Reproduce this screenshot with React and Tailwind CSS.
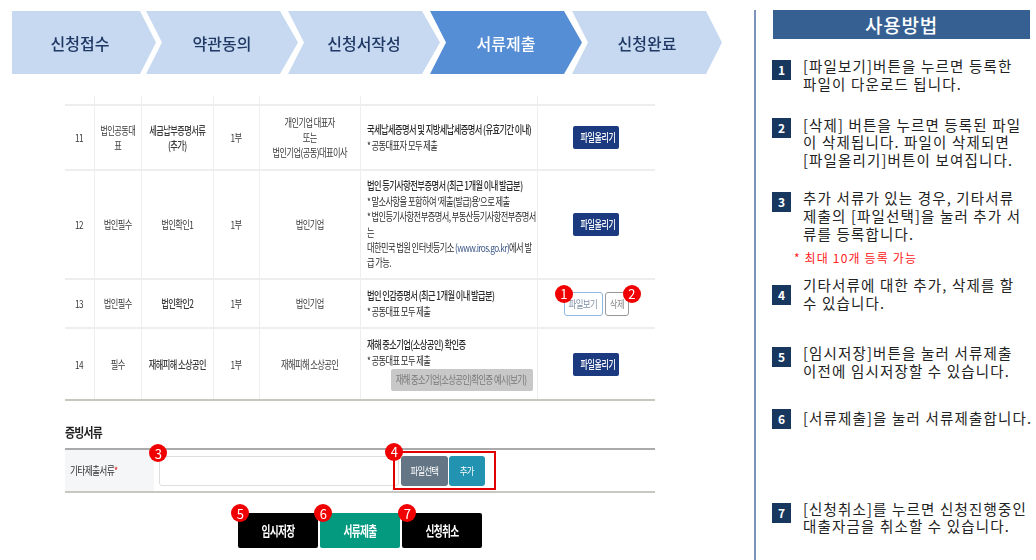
const font = { fontFamily: '"Noto Sans CJK KR", "Noto Sans", sans-serif' };

const steps = [
  { label: "신청접수", first: true },
  { label: "약관동의" },
  { label: "신청서작성" },
  { label: "서류제출", active: true },
  { label: "신청완료", last: true },
];

const guide = [
  { no: 1, mt: "mt-[18px]", sq: "mt-[3px]", text: ["[파일보기]버튼을 누르면 등록한", "파일이 다운로드 됩니다."] },
  { no: 2, mt: "mt-[23px]", sq: "mt-[2px]", text: ["[삭제] 버튼을 누르면 등록된 파일", "이 삭제됩니다. 파일이 삭제되면", "[파일올리기]버튼이 보여집니다."] },
  { no: 3, mt: "mt-[20px]", sq: "mt-[3px]", text: ["추가 서류가 있는 경우, 기타서류", "제출의 [파일선택]을 눌러 추가 서", "류를 등록합니다."], note: "*  최대 10개 등록 가능" },
  { no: 4, mt: "mt-[11px]", sq: "mt-[9px]", text: ["기타서류에 대한 추가, 삭제를 할", "수 있습니다."] },
  { no: 5, mt: "mt-[32px]", sq: "mt-[3px]", text: ["[임시저장]버튼을 눌러 서류제출", "이전에 임시저장할 수 있습니다."] },
  { no: 6, mt: "mt-[29px]", sq: "mt-0", text: ["[서류제출]을 눌러 서류제출합니다."] },
  { no: 7, mt: "mt-[71px]", sq: "mt-[3px]", text: ["[신청취소]를 누르면 신청진행중인", "대출자금을 취소할 수 있습니다."] },
];

// the table in the picture is a squeezed capture, so its text is narrowed
function Mid({ children, className = "" }) {
  return <div className={`mx-[-16.67%] scale-x-[.75] whitespace-nowrap ${className}`}>{children}</div>;
}

function Left({ children }) {
  return <div className="w-[133.3%] origin-left scale-x-[.75] whitespace-nowrap">{children}</div>;
}

function Narrow({ children, className = "scale-x-[.8]" }) {
  return <span className={`inline-block whitespace-nowrap ${className}`}>{children}</span>;
}

function Badge({ n, className }) {
  return (
    <span className={`absolute z-10 flex h-[18px] w-[18px] items-center justify-center rounded-full bg-[#f00000] text-[13px] leading-none text-white ${className}`}>
      {n}
    </span>
  );
}

function UploadBtn() {
  return (
    <button className="h-[23px] w-[46px] rounded-[2px] bg-[#1b3a80] text-[11.5px] font-medium tracking-[-0.05em] text-white">
      <Narrow className="scale-x-[.7]">파일올리기</Narrow>
    </button>
  );
}

function StepBar() {
  return (
    <div className="flex h-[63px]">
      {steps.map((s) => (
        <div
          key={s.label}
          className={`flex h-full items-center justify-center text-[16px] font-medium ${
            s.first
              ? "w-[144px] pr-[8px] [clip-path:polygon(0_0,128px_0,100%_50%,128px_100%,0_100%)]"
              : `-ml-[10px] ${s.last ? "w-[150px]" : "w-[152px]"} [clip-path:polygon(0_0,134px_0,100%_50%,134px_100%,0_100%,16px_50%)]`
          } ${s.active ? "bg-[#558ed5] text-white" : "bg-[#c6d9f1] text-[#1f3864]"}`}
        >
          {s.label}
        </div>
      ))}
    </div>
  );
}

function DocTable() {
  const cell = "border-x border-[#eeeeee] border-b-2 border-b-[#eeeeee] text-center align-middle";
  const desc = "border-x border-[#eeeeee] border-b-2 border-b-[#eeeeee] pl-[6px] align-middle text-[#2b2b2b] leading-[15.4px]";
  const stub = "border-l border-[#eeeeee]";
  return (
    <table className="w-[590px] table-fixed border-collapse text-[11px] leading-[15px] tracking-[-0.07em] text-[#3a3a3a]">
      <colgroup>
        <col className="w-[29px]" />
        <col className="w-[47px]" />
        <col className="w-[72px]" />
        <col className="w-[46px]" />
        <col className="w-[101px]" />
        <col className="w-[177px]" />
        <col className="w-[118px]" />
      </colgroup>
      <tbody>
        <tr className="h-[9px] border-b-2 border-b-[#eeeeee]">
          <td />
          <td className={stub} />
          <td className={stub} />
          <td className={stub} />
          <td className={stub} />
          <td className={stub} />
          <td className={stub} />
        </tr>
        <tr className="h-[65px]">
          <td className={`${cell} border-l-0`}><Mid>11</Mid></td>
          <td className={cell}><Mid>법인공동대<br />표</Mid></td>
          <td className={`${cell} font-medium`}><Mid>세금납부증명서류<br />(추가)</Mid></td>
          <td className={cell}><Mid>1부</Mid></td>
          <td className={cell}><Mid>개인기업 대표자<br />또는<br />법인기업(공동)대표이사</Mid></td>
          <td className={desc}><Left><span className="font-medium">국세납세증명서 및 지방세납세증명서 (유효기간 이내)</span><br />* 공동대표자 모두 제출</Left></td>
          <td className={`${cell} border-r-0`}><UploadBtn /></td>
        </tr>
        <tr className="h-[109px]">
          <td className={`${cell} border-l-0`}><Mid>12</Mid></td>
          <td className={cell}><Mid>법인필수</Mid></td>
          <td className={cell}><Mid>법인확인1</Mid></td>
          <td className={cell}><Mid>1부</Mid></td>
          <td className={cell}><Mid>법인기업</Mid></td>
          <td className={desc}>
            <Left>
              <span className="font-medium">법인 등기사항전부증명서 (최근 1개월 이내 발급분)</span><br />
              * 말소사항을 포함하여 '제출(발급)용'으로 제출<br />
              * 법인등기사항전부증명서, 부동산등기사항전부증명서<br />는<br />
              대한민국 법원 인터넷등기소 <span className="text-[#3f5a8a]">(www.iros.go.kr)</span>에서 발<br />급 가능.
            </Left>
          </td>
          <td className={`${cell} border-r-0`}><UploadBtn /></td>
        </tr>
        <tr className="h-[49px]">
          <td className={`${cell} border-l-0`}><Mid>13</Mid></td>
          <td className={cell}><Mid>법인필수</Mid></td>
          <td className={`${cell} font-medium`}><Mid>법인확인2</Mid></td>
          <td className={cell}><Mid>1부</Mid></td>
          <td className={cell}><Mid>법인기업</Mid></td>
          <td className={desc}><Left><span className="font-medium">법인 인감증명서 (최근 1개월 이내 발급분)</span><br />* 공동대표 모두 제출</Left></td>
          <td className={`${cell} border-r-0`}>
            <div className="relative flex items-center justify-center gap-[2px]">
              <Badge n="1" className="-top-[7px] left-[17px]" />
              <button className="h-[24px] w-[39px] rounded-[3px] border border-[#8fb8e0] text-[10.5px] text-[#7f8fa8]"><Narrow>파일보기</Narrow></button>
              <button className="h-[24px] w-[24px] rounded-[3px] border border-[#999] text-[10.5px] text-[#888]"><Narrow>삭제</Narrow></button>
              <Badge n="2" className="-top-[7px] left-[85px]" />
            </div>
          </td>
        </tr>
        <tr className="h-[72px] border-b-2 border-b-[#c8c8c0]">
          <td className="border-x border-[#eeeeee] border-l-0 text-center"><Mid>14</Mid></td>
          <td className="border-x border-[#eeeeee] text-center"><Mid>필수</Mid></td>
          <td className="border-x border-[#eeeeee] text-center font-medium"><Mid>재해피해 소상공인</Mid></td>
          <td className="border-x border-[#eeeeee] text-center"><Mid>1부</Mid></td>
          <td className="border-x border-[#eeeeee] text-center"><Mid>재해피해 소상공인</Mid></td>
          <td className="border-x border-[#eeeeee] pl-[6px] text-[#2b2b2b] leading-[15.4px]">
            <Left><span className="font-medium">재해 중소기업(소상공인) 확인증</span><br />* 공동대표 모두 제출</Left>
            <div className="ml-[24px] mt-[1px] flex h-[22px] w-[142px] items-center justify-center rounded-[2px] bg-[#c8c8c8] text-[#777]">
              <Narrow className="scale-x-[.75]">재해 중소기업(소상공인)확인증 예시(보기)</Narrow>
            </div>
          </td>
          <td className="border-x border-[#eeeeee] border-r-0 text-center"><UploadBtn /></td>
        </tr>
      </tbody>
    </table>
  );
}

function EvidenceForm() {
  return (
    <div className="mt-[21px] w-[590px] tracking-[-0.06em]">
      <h3 className="origin-left scale-x-[.84] whitespace-nowrap text-[13px] font-bold leading-[20px] text-[#222]">증빙서류</h3>
      <div className="mt-[6px] flex h-[45px] border-y-2 border-t-[#aaaaaa] border-b-[#c8c8c0]">
        <div className="flex w-[89px] items-center bg-[#f5f6f8] pl-[5px] text-[11px] text-[#333]">
          <span className="origin-left scale-x-[.8] whitespace-nowrap">기타제출서류<span className="text-[#e02020]">*</span></span>
        </div>
        <div className="relative flex items-center pl-[5px]">
          <Badge n="3" className="-top-[6px] left-[-5px]" />
          <div className="h-[30px] w-[240px] rounded-[3px] border border-[#dddddd] bg-white" />
          <div className="relative ml-[2px] flex gap-[1px]">
            <Badge n="4" className="-top-[13px] -left-[16px]" />
            <div className="pointer-events-none absolute -left-[8px] -top-[5px] h-[39px] w-[103px] border-2 border-[#e00000]" />
            <button className="h-[30px] w-[47px] rounded-[3px] bg-[#647685] text-[10.5px] text-white"><Narrow>파일선택</Narrow></button>
            <button className="h-[30px] w-[36px] rounded-[3px] bg-[#2293b0] text-[10.5px] text-white"><Narrow>추가</Narrow></button>
          </div>
        </div>
      </div>
      <div className="mt-[20px] flex justify-center gap-[2px]">
        {[
          { n: "5", label: "임시저장", bg: "bg-black", pos: "-left-[7px]" },
          { n: "6", label: "서류제출", bg: "bg-[#049a80]", pos: "-left-[6px]" },
          { n: "7", label: "신청취소", bg: "bg-black", pos: "-left-[4px]" },
        ].map((b) => (
          <div key={b.n} className="relative">
            <Badge n={b.n} className={`-top-[9px] ${b.pos}`} />
            <button className={`h-[35px] w-[80px] rounded-[2px] text-[13.5px] font-bold text-white ${b.bg}`}><Narrow className="scale-x-[.72]">{b.label}</Narrow></button>
          </div>
        ))}
      </div>
    </div>
  );
}

function GuidePanel() {
  return (
    <aside className="w-[257px] text-[14.5px] leading-[17.8px] tracking-[0.08em] text-[#222]">
      <h2 className="flex h-[29px] items-center justify-center bg-[#366092] text-[19px] font-medium tracking-[0.04em] text-white">사용방법</h2>
      {guide.map((g) => (
        <div key={g.no} className={g.mt}>
          <div className="flex items-start gap-[12px]">
            <span className={`-ml-[1px] flex h-[20px] w-[19px] shrink-0 items-center justify-center bg-[#17375e] text-[12px] font-bold tracking-normal text-white ${g.sq}`}>{g.no}</span>
            <p className="whitespace-nowrap">
              {g.text.map((t) => (
                <span key={t} className="block">{t}</span>
              ))}
            </p>
          </div>
          {g.note && <p className="ml-[21px] mt-[9px] text-[12px] leading-[14px] text-[#ff2020]">{g.note}</p>}
        </div>
      ))}
    </aside>
  );
}

export default function App() {
  return (
    <div style={font} className="flex h-[560px] w-[1036px] overflow-hidden bg-white">
      <main className="w-[754px] pt-[11px]">
        <div className="pl-[12px] blur-[0.3px]">
          <StepBar />
        </div>
        <div className="mt-[22px] pl-[65px] blur-[0.35px]">
          <DocTable />
          <EvidenceForm />
        </div>
      </main>
      <div className="mt-[10px] w-[2px] bg-[#7a93bb]" />
      <div className="ml-[17px] pt-[10px]">
        <GuidePanel />
      </div>
    </div>
  );
}
